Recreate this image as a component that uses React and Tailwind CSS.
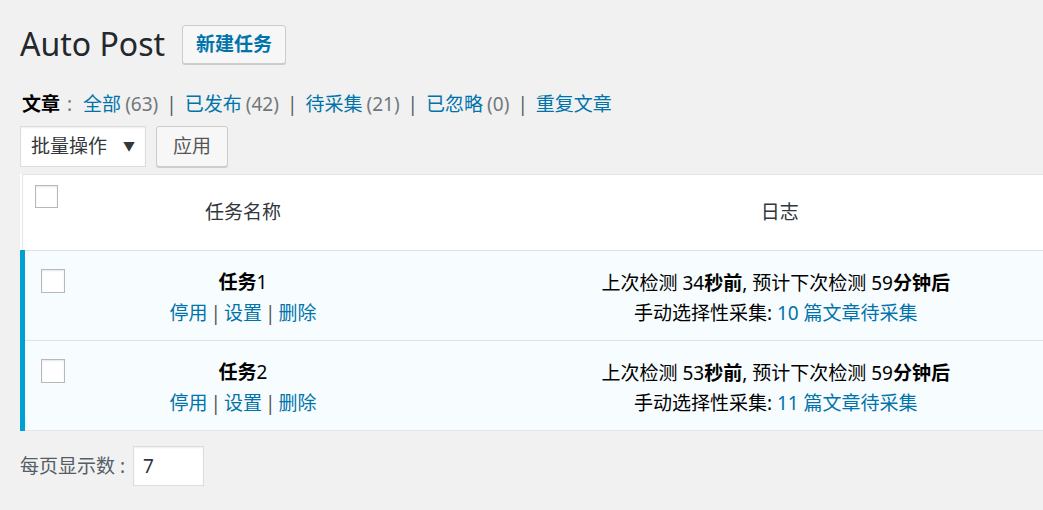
const FONT = { fontFamily: '"Noto Sans", "Noto Sans CJK SC", sans-serif' };

const filters = [
  { label: '全部', count: 63 },
  { label: '已发布', count: 42 },
  { label: '待采集', count: 21 },
  { label: '已忽略', count: 0 },
  { label: '重复文章' },
];

const tasks = [
  { name: '任务', num: '1', last: '34', next: '59', pending: '10' },
  { name: '任务', num: '2', last: '53', next: '59', pending: '11' },
];

function Checkbox({ className = 'h-[24px] w-[24px]' }) {
  return (
    <div className={`border border-[#b4b9be] bg-white shadow-[inset_0_1px_2px_rgba(0,0,0,0.1)] ${className}`} />
  );
}

export default function App() {
  return (
    <div className="h-[510px] w-full overflow-hidden bg-[#f1f1f1] text-[19px] text-[#23282d]" style={FONT}>
      <div className="pl-[20px]">
        <div className="flex items-center gap-[17px] pt-[22px]">
          <h1 className="text-[32px] leading-[44px] font-normal text-[#23282d]">Auto Post</h1>
          <button className="h-[39px] rounded-[3px] border border-[#cccccc] bg-[#f7f7f7] px-[13px] text-[19px] font-bold text-[#0073aa] shadow-[0_1px_0_#ccc]">
            新建任务
          </button>
        </div>

        <div className="mt-[25px] flex items-center pl-[2px] text-[19px] leading-[26px]">
          <span className="font-bold text-black">文章</span>
          <span className="ml-[7px] mr-[11px] text-[#72777c]">:</span>
          {filters.map((f, i) => (
            <span key={f.label} className="flex items-center">
              <a className="text-[#0073aa]">{f.label}</a>
              {f.count !== undefined && <span className="ml-[4px] text-[#72777c]">({f.count})</span>}
              {i < filters.length - 1 && <span className="mx-[8px] text-[#555d66]">|</span>}
            </span>
          ))}
        </div>

        <div className="mt-[9px] flex items-center gap-[10px]">
          <div className="flex h-[41px] w-[126px] items-center justify-between border border-[#dddddd] bg-white pl-[10px] pr-[10px] shadow-[inset_0_1px_2px_rgba(0,0,0,0.07)]">
            <span className="text-[#32373c]">批量操作</span>
            <span className="text-[12px] text-[#32373c]">▼</span>
          </div>
          <button className="h-[41px] w-[72px] rounded-[3px] border border-[#cccccc] bg-[#f7f7f7] text-[#555] shadow-[0_1px_0_#ccc]">
            应用
          </button>
        </div>

        <table className="mt-[7px] w-[1131px] border border-[#e5e5e5] bg-white" style={{ borderCollapse: 'collapse' }}>
          <thead>
            <tr className="h-[76px] border-b border-[#e1e1e1]">
              <th className="w-[54px] pl-[12px] align-top pt-[10px] font-normal">
                <Checkbox className="h-[23px] w-[23px]" />
              </th>
              <th className="w-[333px] text-center font-normal text-[#32373c]">任务名称</th>
              <th className="text-center font-normal text-[#32373c]">日志</th>
            </tr>
          </thead>
          <tbody>
            {tasks.map((t, i) => (
              <tr key={t.num} className={`h-[90px] bg-[#f7fcfe] ${i === 0 ? 'border-b border-[#e1e1e1]' : ''}`}>
                <td className="w-[54px] border-l-[5px] border-l-[#00a0d2] pl-[16px] align-top pt-[18px]">
                  <Checkbox />
                </td>
                <td className="pt-[4px] text-center leading-[31px]">
                  <div className="font-bold text-black">{t.name}<span className="font-normal">{t.num}</span></div>
                  <div>
                    <a className="text-[#0073aa]">停用</a>
                    <span className="mx-[3px] text-[#555]">|</span>
                    <a className="text-[#0073aa]">设置</a>
                    <span className="mx-[3px] text-[#555]">|</span>
                    <a className="text-[#0073aa]">删除</a>
                  </div>
                </td>
                <td className="pt-[4px] pr-[8px] text-center leading-[30px] text-black">
                  <div>
                    上次检测 {t.last}<b>秒前</b>, 预计下次检测 {t.next}<b>分钟后</b>
                  </div>
                  <div>
                    手动选择性采集: <a className="text-[#0073aa]">{t.pending} 篇文章待采集</a>
                  </div>
                </td>
              </tr>
            ))}
          </tbody>
        </table>

        <div className="mt-[15px] flex items-center">
          <span className="text-[#555d66]">每页显示数 :</span>
          <div className="ml-[8px] flex h-[40px] w-[71px] items-center border border-[#dddddd] bg-white px-[9px] text-[#32373c] shadow-[inset_0_1px_2px_rgba(0,0,0,0.07)]">
            7
          </div>
        </div>
      </div>
    </div>
  );
}
